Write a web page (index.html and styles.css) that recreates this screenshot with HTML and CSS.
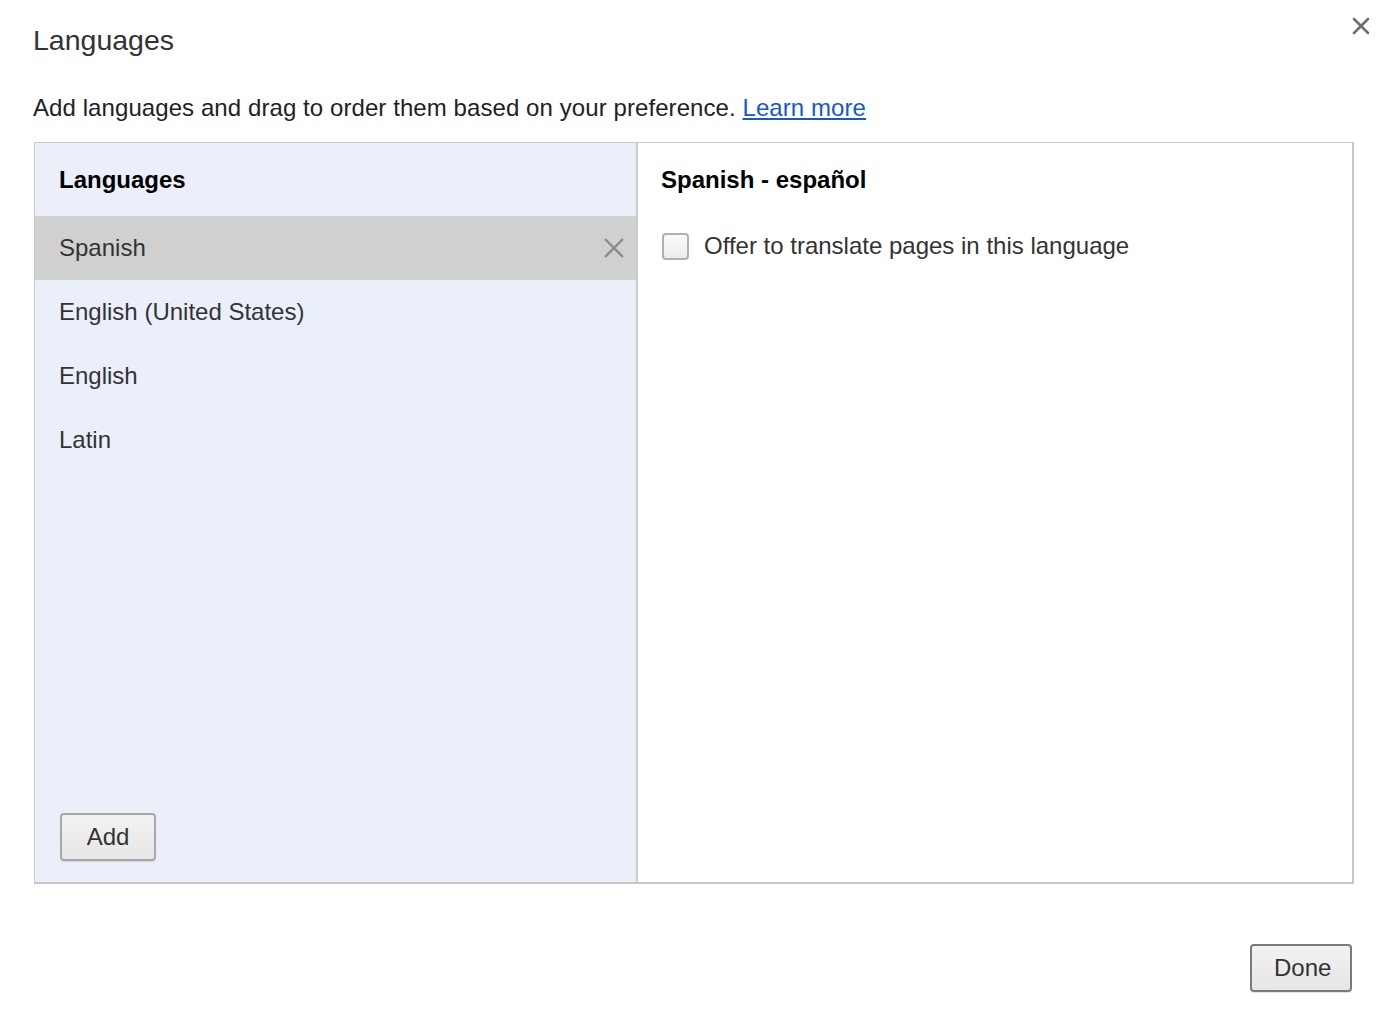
FILE: index.html
```html
<!DOCTYPE html>
<html>
<head>
<meta charset="utf-8">
<link rel="stylesheet" href="styles.css">
</head>
<body>
<div class="dialog">
  <div class="title-row">
    <h1 class="title">Languages</h1>
    <button class="close" aria-label="Close">
      <svg width="18" height="18" viewBox="0 0 18 18"><path d="M2 2 L16 16 M16 2 L2 16" stroke="#6e6e6e" stroke-width="2.6" stroke-linecap="round"/></svg>
    </button>
  </div>
  <p class="desc">Add languages and drag to order them based on your preference. <a href="#" class="link">Learn more</a></p>
  <div class="panel">
    <div class="left">
      <div class="left-head">Languages</div>
      <ul class="list">
        <li class="item selected"><span>Spanish</span>
          <svg class="remove" width="22" height="22" viewBox="0 0 22 22"><path d="M2 2 L20 20 M20 2 L2 20" stroke="#8a8a8a" stroke-width="2.4"/></svg>
        </li>
        <li class="item"><span>English (United States)</span></li>
        <li class="item"><span>English</span></li>
        <li class="item"><span>Latin</span></li>
      </ul>
      <div class="left-foot"><button class="btn">Add</button></div>
    </div>
    <div class="right">
      <div class="right-head">Spanish - español</div>
      <label class="opt"><span class="check"></span><span>Offer to translate pages in this language</span></label>
    </div>
  </div>
  <div class="actions"><button class="btn done">Done</button></div>
</div>
</body>
</html>
```

FILE: styles.css
```css
html, body {
  margin: 0;
  padding: 0;
  background: #fff;
}
body {
  font-family: "Liberation Sans", Arial, Helvetica, sans-serif;
  color: #333;
}
.dialog {
  width: 1388px;
  height: 1018px;
  box-sizing: border-box;
  padding: 0 34px 0 34px;
  display: flex;
  flex-direction: column;
}
.title-row {
  display: flex;
  justify-content: space-between;
  align-items: flex-start;
  height: 93px;
}
.title {
  margin: 23px 0 0 -1px;
  font-size: 28.5px;
  font-weight: normal;
  line-height: 34px;
  color: #333;
}
.close {
  margin: 17px -16px 0 0;
  padding: 0;
  border: none;
  background: none;
  width: 18px;
  height: 18px;
}
.desc {
  margin: 0 0 0 -1px;
  font-size: 24px;
  line-height: 30px;
  height: 49px;
  color: #222;
  letter-spacing: 0.08px;
}
.link {
  color: #1558d6;
  text-decoration: underline;
}
.panel {
  display: flex;
  height: 742px;
  width: 1320px;
  box-sizing: border-box;
  border-style: solid;
  border-width: 1px 2px 2px 1px;
  border-color: #c8c8c8;
}
.left {
  width: 601px;
  background: #ebeff9;
  border-right: 2px solid #cbcbcb;
  display: flex;
  flex-direction: column;
}
.left-head {
  height: 73px;
  box-sizing: border-box;
  padding-left: 24px;
  display: flex;
  align-items: center;
  font-size: 24px;
  font-weight: bold;
  color: #000;
}
.list {
  list-style: none;
  margin: 0;
  padding: 0;
  flex: 1;
}
.item {
  height: 64px;
  box-sizing: border-box;
  padding: 0 11px 0 24px;
  display: flex;
  align-items: center;
  justify-content: space-between;
  font-size: 24px;
  color: #333;
}
.item.selected {
  background: #d0d0d0;
}
.left-foot {
  padding: 0 0 21px 25px;
}
.btn {
  font-family: "Liberation Sans", Arial, Helvetica, sans-serif;
  font-size: 24px;
  color: #333;
  height: 48px;
  padding: 0 22px;
  border: 2px solid #a8a8a8;
  border-radius: 4px;
  background: linear-gradient(#f2f2f2, #e6e6e6);
  box-shadow: 0 1px 1px rgba(0,0,0,0.12);
}
.left-foot .btn {
  width: 96px;
}
.right {
  flex: 1;
  padding-left: 23px;
}
.right-head {
  height: 73px;
  display: flex;
  align-items: center;
  font-size: 24px;
  font-weight: bold;
  color: #000;
}
.opt {
  display: flex;
  align-items: center;
  height: 60px;
  font-size: 24px;
  color: #333;
}
.check {
  width: 23px;
  height: 23px;
  border: 2px solid #b0b0b0;
  border-radius: 4px;
  background: linear-gradient(#fafafa, #ececec);
  margin: 0 15px 0 1px;
}
.actions {
  display: flex;
  justify-content: flex-end;
  padding-top: 60px;
  width: 1318px;
}
.done {
  width: 102px;
  border-color: #7a7a7a;
}
```
